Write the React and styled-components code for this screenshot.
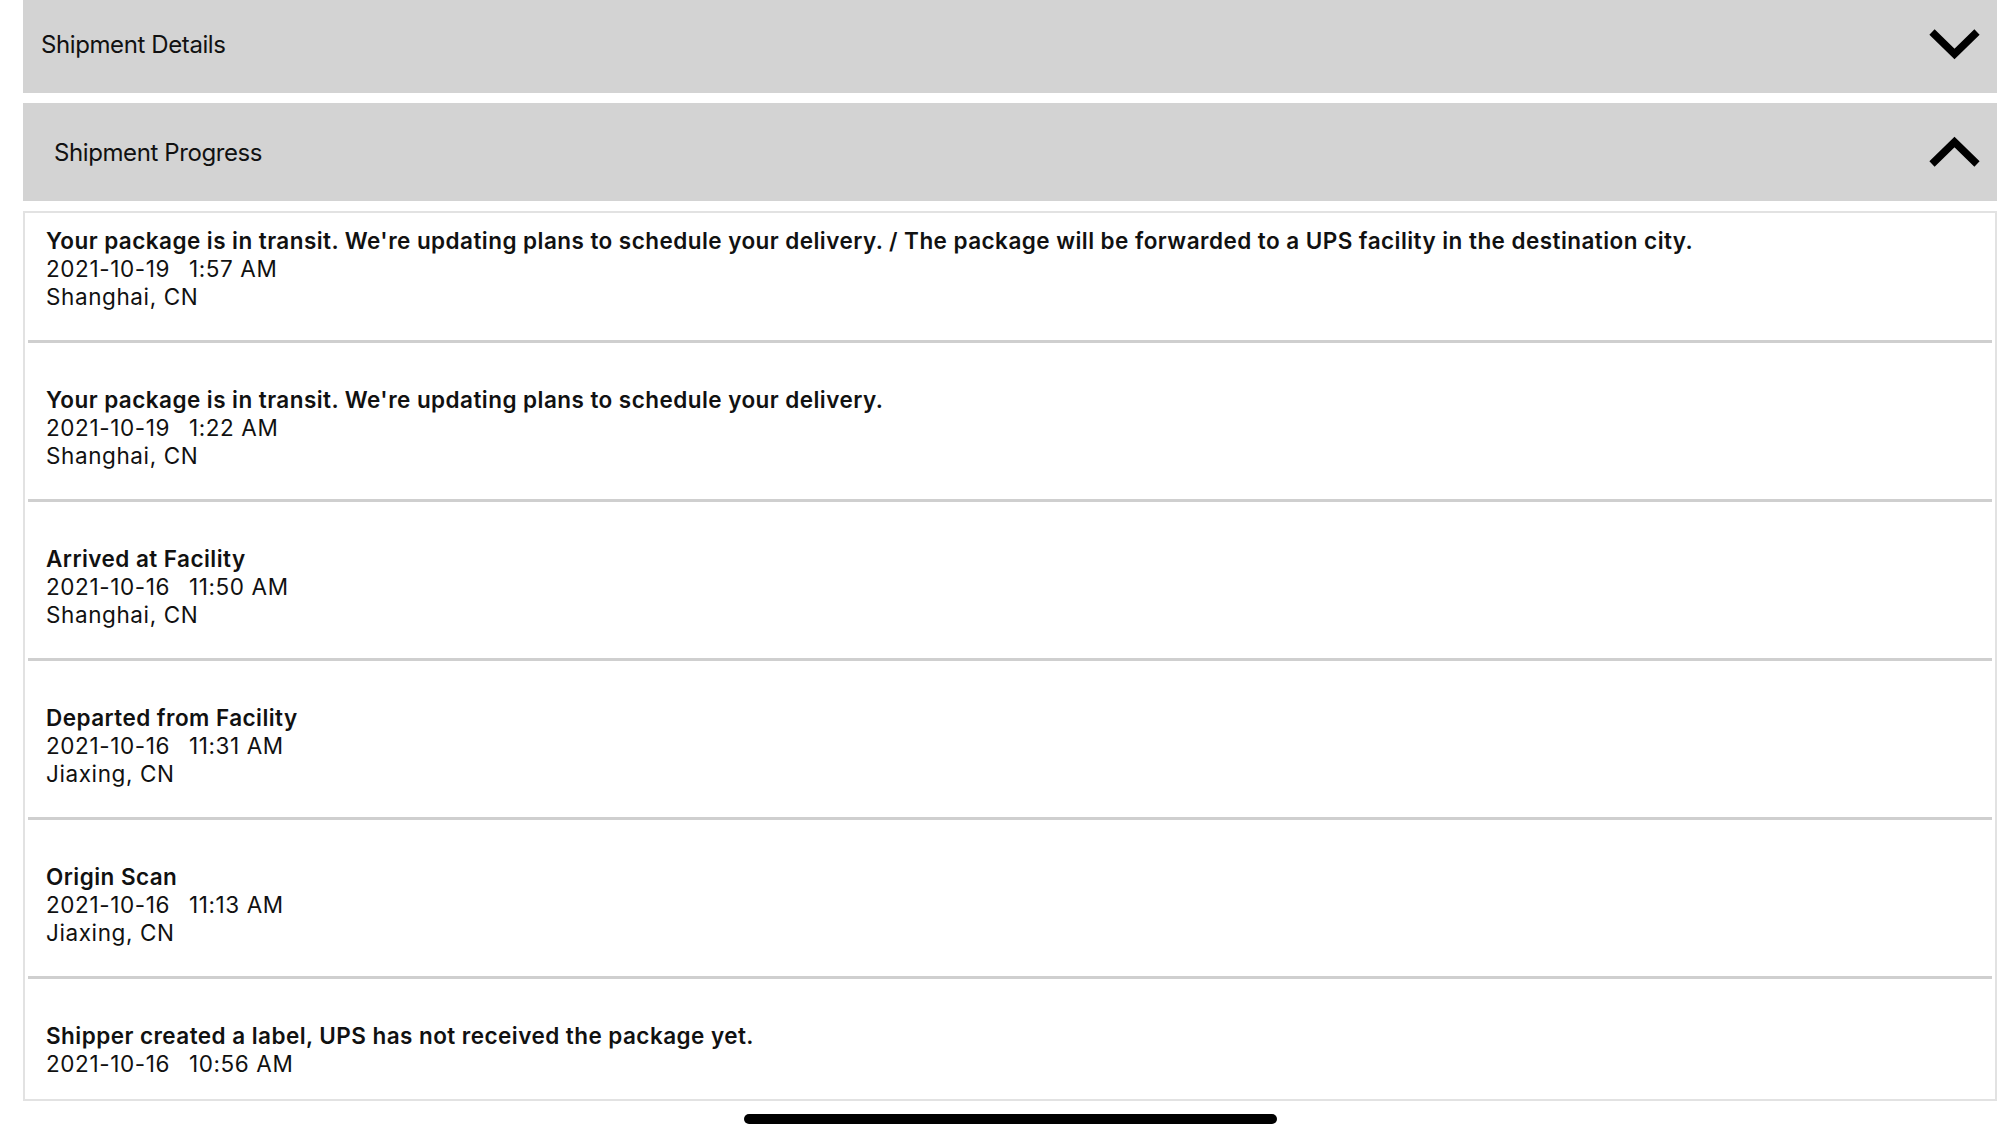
import styled, { createGlobalStyle } from "styled-components";

const GlobalStyle = createGlobalStyle`
  html, body {
    margin: 0;
    padding: 0;
    background: #fff;
  }
  body {
    font-family: Inter, "Noto Sans", "Liberation Sans", sans-serif;
    color: #111;
    overflow: hidden;
  }
`;

const Page = styled.div`
  display: flex;
  flex-direction: column;
  margin-top: -5px;
  padding: 0 3px 0 23px;
`;

const Header = styled.div`
  display: flex;
  align-items: center;
  justify-content: space-between;
  height: 98px;
  padding: 0 17px 0 ${(p) => p.$indent}px;
  margin-bottom: 10px;
  background: #d3d3d3;
  font-size: 24px;
  font-weight: 400;
  letter-spacing: -0.4px;
`;

const Chevron = styled.svg`
  width: 51px;
  height: 32px;
  display: block;
`;

const List = styled.div`
  border: 2px solid #e2e2e2;
  padding: 0 3px;
`;

const Row = styled.div`
  padding: ${(p) => (p.$first ? 14 : 43)}px 18px ${(p) => (p.$last ? 21 : 29)}px;
  border-bottom: ${(p) => (p.$last ? "none" : "3px solid #cfcfcf")};
  font-size: 22.5px;
  line-height: 28px;
  letter-spacing: 0.6px;
`;

const Title = styled.div`
  font-weight: 600;
  letter-spacing: 0.45px;
`;

const Line = styled.div`
  font-weight: 400;
`;

const Time = styled.span`
  margin-left: 19px;
`;

const Indicator = styled.div`
  align-self: center;
  width: 533px;
  height: 10px;
  margin-top: 13px;
  border-radius: 5px;
  background: #000;
`;

const events = [
  {
    title:
      "Your package is in transit. We're updating plans to schedule your delivery. / The package will be forwarded to a UPS facility in the destination city.",
    date: "2021-10-19",
    time: "1:57 AM",
    place: "Shanghai, CN",
  },
  {
    title: "Your package is in transit. We're updating plans to schedule your delivery.",
    date: "2021-10-19",
    time: "1:22 AM",
    place: "Shanghai, CN",
  },
  { title: "Arrived at Facility", date: "2021-10-16", time: "11:50 AM", place: "Shanghai, CN" },
  { title: "Departed from Facility", date: "2021-10-16", time: "11:31 AM", place: "Jiaxing, CN" },
  { title: "Origin Scan", date: "2021-10-16", time: "11:13 AM", place: "Jiaxing, CN" },
  {
    title: "Shipper created a label, UPS has not received the package yet.",
    date: "2021-10-16",
    time: "10:56 AM",
  },
];

const ChevronIcon = ({ up }) => (
  <Chevron viewBox="0 0 51 32">
    <polyline
      points={up ? "3,28 25.5,6 48,28" : "3,4 25.5,26 48,4"}
      fill="none"
      stroke="#000"
      strokeWidth="7.5"
      strokeLinejoin="miter"
    />
  </Chevron>
);

export default function App() {
  return (
    <>
      <GlobalStyle />
      <Page>
        <Header $indent={18}>
          Shipment Details
          <ChevronIcon />
        </Header>
        <Header $indent={31}>
          Shipment Progress
          <ChevronIcon up />
        </Header>
        <List>
          {events.map((e, i) => (
            <Row key={i} $first={i === 0} $last={i === events.length - 1}>
              <Title>{e.title}</Title>
              <Line>
                {e.date}
                <Time>{e.time}</Time>
              </Line>
              {e.place && <Line>{e.place}</Line>}
            </Row>
          ))}
        </List>
        <Indicator />
      </Page>
    </>
  );
}
